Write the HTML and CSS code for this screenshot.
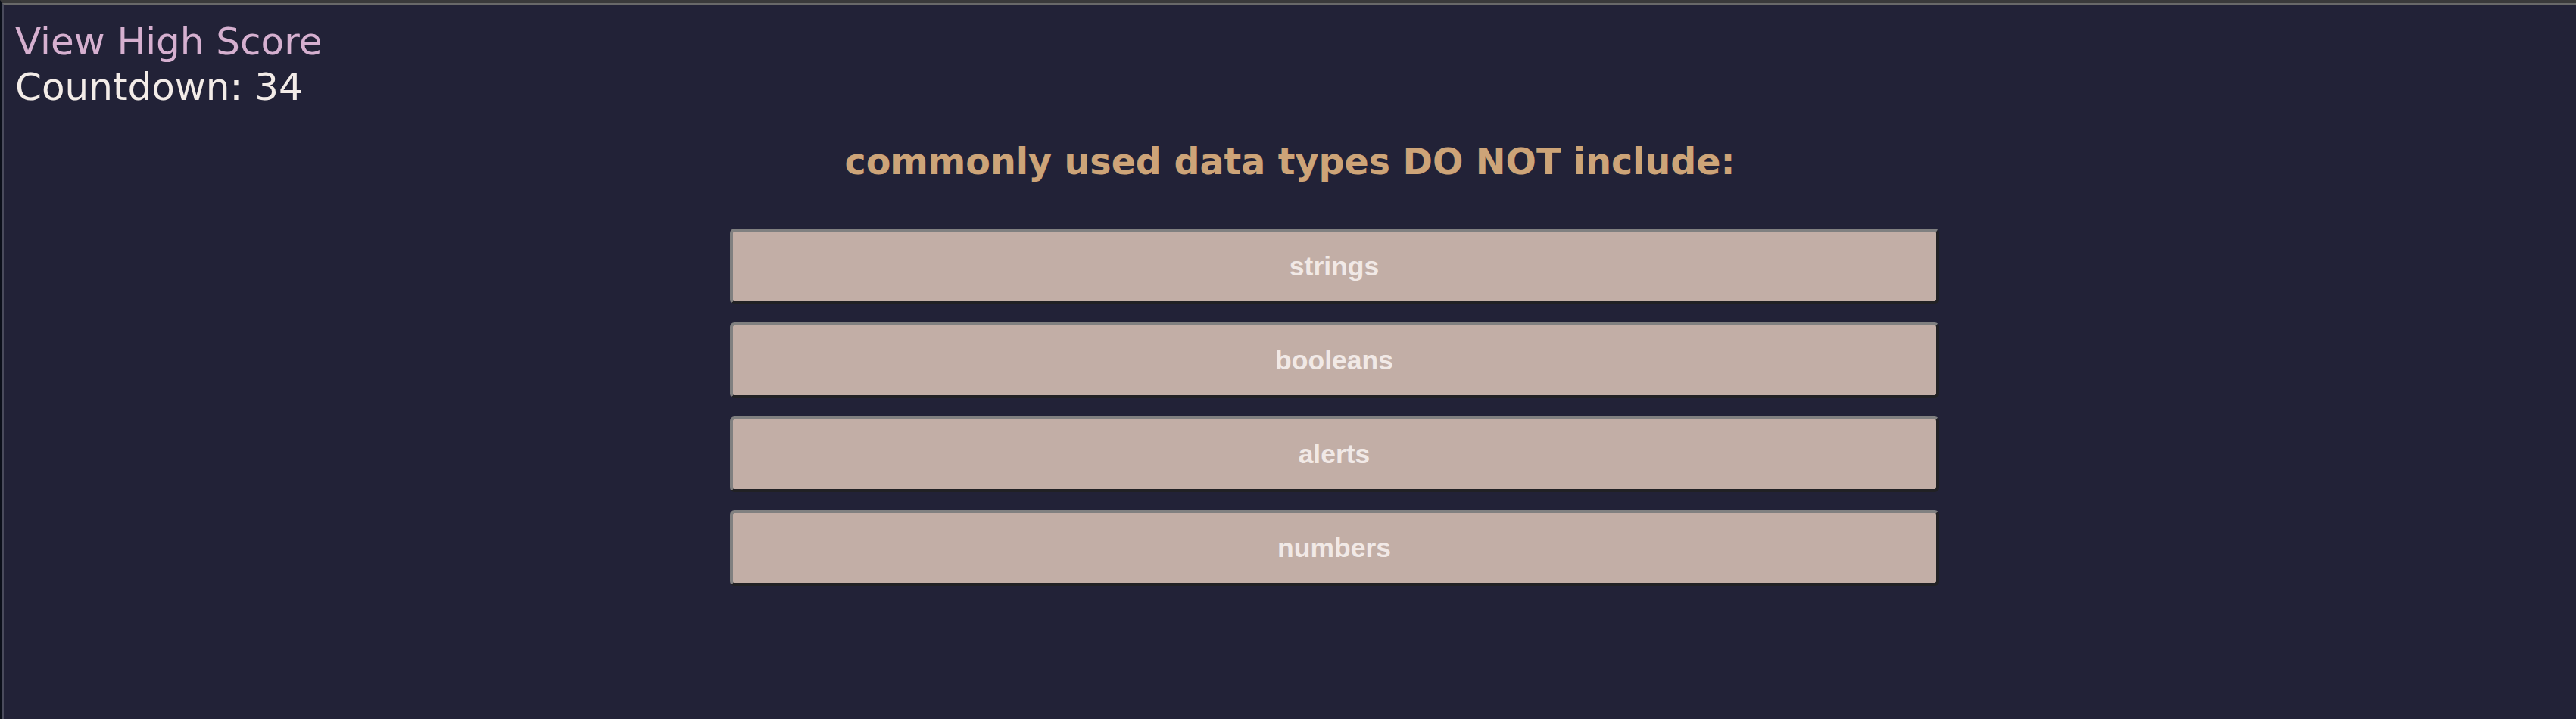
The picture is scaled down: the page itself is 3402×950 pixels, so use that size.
FILE: index.html
```
<!DOCTYPE html>
<html lang="en">
<head>
    <meta charset="UTF-8">
    <meta name="viewport" content="width=device-width, initial-scale=1.0">
    <title>Code Quiz</title>
    <link rel="stylesheet" href="styles.css">
</head>
<body>
    <div class="edge-mark"></div>
    <div class="page">
        <header class="top-bar">
            <a href="#" class="high-score">View High Score</a>
            <div class="countdown">Countdown: <span id="timer">34</span></div>
        </header>
        <main class="quiz">
            <h2 class="question">commonly used data types DO NOT include:</h2>
            <div class="answers">
                <button class="answer">strings</button>
                <button class="answer">booleans</button>
                <button class="answer">alerts</button>
                <button class="answer">numbers</button>
            </div>
        </main>
    </div>
</body>
</html>
```

FILE: styles.css
```
html, body {
    height: 100%;
}
body {
    margin: 0;
    background-color: #222237;
    font-family: "DejaVu Sans", Verdana, sans-serif;
    border-top: 4px solid #3a3a3b;
    border-left: 3px solid #0b0f19;
    box-sizing: border-box;
    position: relative;
}
.edge-mark {
    position: absolute;
    left: -3px;
    top: 270px;
    width: 3px;
    height: 28px;
    background-color: #2b5a98;
}
.page {
    min-height: 100%;
    box-sizing: border-box;
    border-top: 2px solid #696969;
    border-left: 2px solid #4a4b5c;
}
.top-bar {
    padding: 19px 0 0 15px;
    font-size: 50px;
    line-height: 60px;
}
.high-score {
    display: block;
    color: #d6b0d0;
    text-decoration: none;
}
.countdown {
    color: #f3ece8;
}
.question {
    margin: 41px 0 60px;
    font-size: 47.5px;
    line-height: 56px;
    font-weight: bold;
    color: #cda478;
    text-align: center;
}
.answers {
    width: 1597px;
    margin-left: calc(50% - 740px);
    display: flex;
    flex-direction: column;
    gap: 24px;
}
.answer {
    height: 100px;
    padding: 0;
    background-color: #c2aea6;
    color: #f1e9e6;
    font-family: "Liberation Sans", Arial, sans-serif;
    font-size: 35.5px;
    font-weight: bold;
    border: 4px solid;
    border-color: #808080 #212124 #212124 #808080;
    border-radius: 6px;
    cursor: pointer;
}
.answer:hover {
    background-color: #b39c93;
}
```
